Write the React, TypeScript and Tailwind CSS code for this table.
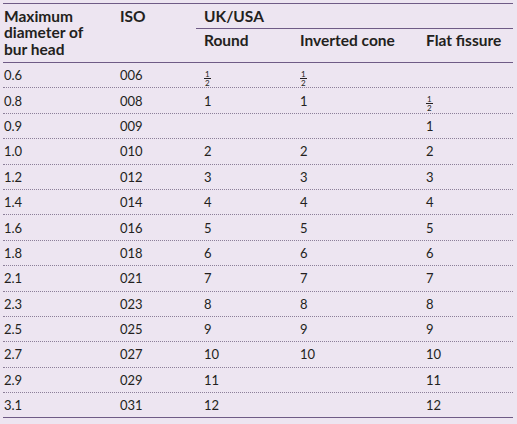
const rows: [string, string, string, string, string][] = [
  ["0.6", "006", "½", "½", ""],
  ["0.8", "008", "1", "1", "½"],
  ["0.9", "009", "", "", "1"],
  ["1.0", "010", "2", "2", "2"],
  ["1.2", "012", "3", "3", "3"],
  ["1.4", "014", "4", "4", "4"],
  ["1.6", "016", "5", "5", "5"],
  ["1.8", "018", "6", "6", "6"],
  ["2.1", "021", "7", "7", "7"],
  ["2.3", "023", "8", "8", "8"],
  ["2.5", "025", "9", "9", "9"],
  ["2.7", "027", "10", "10", "10"],
  ["2.9", "029", "11", "", "11"],
  ["3.1", "031", "12", "", "12"],
];

function Cell({ value }: { value: string }) {
  if (value === "½") {
    return (
      <span className="inline-flex flex-col items-center text-[8px] leading-[8px] mt-[2px]">
        <span className="border-b border-[#231f20] px-[1px]">1</span>
        <span>2</span>
      </span>
    );
  }
  return <span>{value}</span>;
}

export default function App() {
  return (
    <div className="w-[517px] h-[424px] bg-[#ede5f1] pt-[3px] pl-[3px] font-['Lato',sans-serif] text-[#231f20]">
      <div className="w-[510px] border-t border-[#6f5b86]">
        <div className="grid grid-cols-[117px_84px_96px_126px_1fr] grid-rows-[25px_1fr] h-[59px] border-b border-[#6f5b86] font-bold text-[15.5px] leading-[16.3px]">
          <div className="row-span-2 pl-px pt-[4px]">
            Maximum
            <br />
            diameter of
            <br />
            bur head
          </div>
          <div className="pt-[4px]">ISO</div>
          <div className="col-span-3 -ml-2 pl-2 pt-[4px] border-b border-[#6f5b86]">UK/USA</div>
          <div className="col-start-3 pt-[3px]">Round</div>
          <div className="pt-[3px]">Inverted cone</div>
          <div className="pt-[3px]">Flat fissure</div>
        </div>
        {rows.map((r, i) => (
          <div
            key={r[0]}
            className={
              "grid grid-cols-[117px_84px_96px_126px_1fr] h-[25.4px] items-center text-[13px] leading-[16px] " +
              (i === rows.length - 1 ? "border-b border-[#6f5b86]" : "border-b border-dotted border-[#8c7f99]")
            }
          >
            <div className="pl-px">{r[0]}</div>
            <div>{r[1]}</div>
            <div>
              <Cell value={r[2]} />
            </div>
            <div>
              <Cell value={r[3]} />
            </div>
            <div>
              <Cell value={r[4]} />
            </div>
          </div>
        ))}
      </div>
    </div>
  );
}
